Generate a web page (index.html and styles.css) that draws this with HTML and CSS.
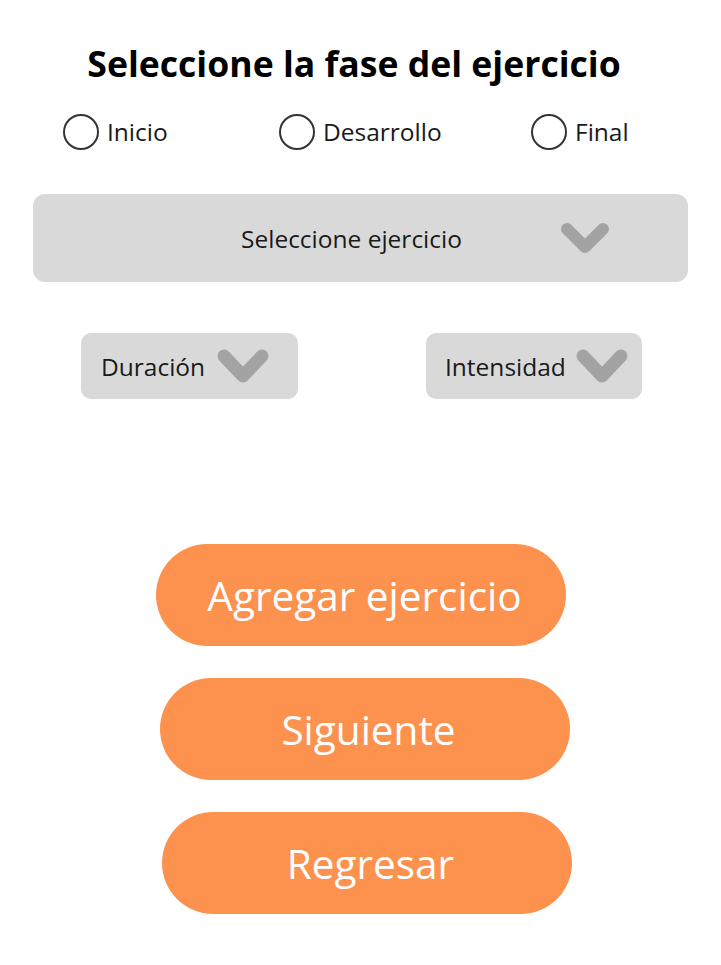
FILE: index.html
```html
<!DOCTYPE html>
<html lang="es">
<head>
<meta charset="utf-8">
<link rel="stylesheet" href="styles.css">
</head>
<body>
<main class="page">
  <h1 class="title">Seleccione la fase del ejercicio</h1>
  <div class="radios">
    <label class="radio"><span class="circle"></span><span>Inicio</span></label>
    <label class="radio"><span class="circle"></span><span>Desarrollo</span></label>
    <label class="radio"><span class="circle"></span><span>Final</span></label>
  </div>
  <div class="select-big">
    <span class="select-text">Seleccione ejercicio</span>
    <svg class="chev" width="48" height="34" viewBox="0 0 48 34"><path d="M6 6 L24 24 L42 6" fill="none" stroke="#a3a3a3" stroke-width="12" stroke-linecap="round" stroke-linejoin="round"/></svg>
  </div>
  <div class="small-row">
    <div class="select-small">
      <span>Duración</span>
      <svg class="chev" width="52" height="38" viewBox="0 0 52 38"><path d="M7 7 L26 27 L45 7" fill="none" stroke="#a3a3a3" stroke-width="13" stroke-linecap="round" stroke-linejoin="round"/></svg>
    </div>
    <div class="select-small right">
      <span>Intensidad</span>
      <svg class="chev" width="52" height="38" viewBox="0 0 52 38"><path d="M7 7 L26 27 L45 7" fill="none" stroke="#a3a3a3" stroke-width="13" stroke-linecap="round" stroke-linejoin="round"/></svg>
    </div>
  </div>
  <div class="buttons">
    <button class="btn b1">Agregar ejercicio</button>
    <button class="btn b2">Siguiente</button>
    <button class="btn b3">Regresar</button>
  </div>
</main>
</body>
</html>
```
FILE: styles.css
```css
* { box-sizing: border-box; }
html, body { margin: 0; padding: 0; background: #ffffff; }
body { font-family: "Open Sans", "Liberation Sans", sans-serif; color: #111; }
.page { width: 721px; height: 965px; padding-top: 40px; }
.title {
  margin: 0;
  text-align: center;
  font-size: 35.6px;
  font-weight: 700;
  line-height: 46px;
  color: #000;
  padding-right: 13px;
}
.radios {
  display: grid;
  grid-template-columns: 216px 252px auto;
  padding-left: 63px;
  margin-top: 28px;
}
.radio { display: flex; align-items: center; gap: 8px; font-size: 24.5px; line-height: 36px; color: #1a1a1a; }
.circle { width: 36px; height: 36px; border: 2px solid #333; border-radius: 50%; display: block; }
.select-big {
  margin: 44px 33px 0 33px;
  height: 88px;
  background: #d9d9d9;
  border-radius: 12px;
  display: flex;
  align-items: center;
  padding-left: 208px;
  gap: 99px;
}
.select-text { font-size: 24.5px; color: #1a1a1a; }
.chev { display: block; margin-top: 4px; }
.small-row { display: flex; justify-content: space-between; padding: 0 79px 0 81px; margin-top: 51px; }
.select-small {
  width: 217px;
  height: 66px;
  background: #d9d9d9;
  border-radius: 10px;
  display: flex;
  align-items: center;
  padding-left: 20px;
  gap: 12px;
  font-size: 24.5px;
  color: #1a1a1a;
}
.select-small.right { width: 216px; padding-left: 19px; gap: 10px; }
.buttons { display: flex; flex-direction: column; gap: 32px; margin-top: 145px; }
.btn {
  width: 410px;
  height: 102px;
  border: none;
  border-radius: 51px;
  background: #fd914e;
  color: #fff;
  font-family: "Open Sans", "Liberation Sans", sans-serif;
  font-size: 40.5px;
  padding: 0 0 0 7px;
}
.b1 { margin-left: 156px; }
.b2 { margin-left: 160px; }
.b3 { margin-left: 162px; }
```
